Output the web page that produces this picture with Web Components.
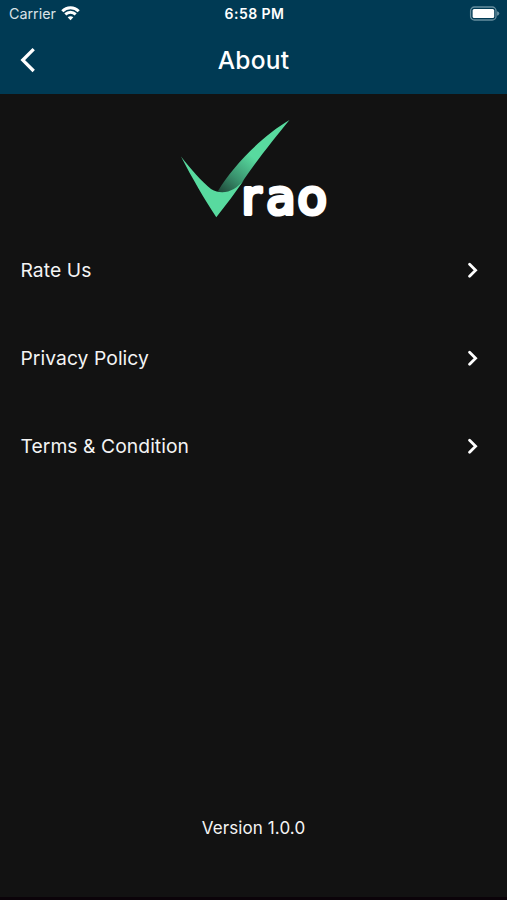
<!DOCTYPE html>
<html lang="en">
<head>
<meta charset="utf-8">
<title>About</title>
<style>
body{
    margin: 0;
    background: #121212;
}
</style>
</head>
<body>

<about-page>
    <status-bar slot="top" carrier="Carrier" time="6:58 PM"></status-bar>
    <nav-bar slot="top">About</nav-bar>
    <vrao-logo></vrao-logo>
    <menu-list>
        <menu-row>Rate Us</menu-row>
        <menu-row>Privacy Policy</menu-row>
        <menu-row>Terms &amp; Condition</menu-row>
    </menu-list>
    <span slot="version">Version 1.0.0</span>
</about-page>

<script>
function define(name, html){
    const template = document.createElement('template');
    template.innerHTML = html;

    customElements.define(name, class extends HTMLElement{
        constructor(){
            super();
            this.attachShadow({mode: 'open'});
            this.shadowRoot.appendChild(template.content.cloneNode(true));
        }

        // copies attributes into the spans with the same id
        connectedCallback(){
            this.shadowRoot.querySelectorAll('span[id]').forEach(span => {
                span.textContent = this.getAttribute(span.id);
            });
        }
    });
}

define('about-page', `
<style>
:host{
    display: flex;
    flex-direction: column;
    box-sizing: border-box;
    width: 507px;
    height: 900px;
    overflow: hidden;
    background: #121212;
    border-bottom: 3px solid #0b0309;
    color: #f4f4f4;
    font-family: Inter, "Liberation Sans", sans-serif;
}
header{
    height: 94px;
    background: #003a54;
    color: #fff;
}
main{
    flex: 1;
}
footer{
    padding-bottom: 56px;
    text-align: center;
    font-size: 17px;
    line-height: 26px;
    letter-spacing: 0.1px;
}
</style>
<header><slot name="top"></slot></header>
<main><slot></slot></main>
<footer><slot name="version"></slot></footer>
`);

define('status-bar', `
<style>
:host{
    display: grid;
    grid-template-columns: 1fr auto 1fr;
    align-items: center;
    height: 27px;
    padding: 0 7px 0 9px;
    font-size: 14.3px;
}
.left{
    display: flex;
    align-items: center;
    gap: 5px;
    color: #d9e2e7;
}
#time{
    font-size: 14px;
    font-weight: 600;
    letter-spacing: 0.45px;
}
.battery{
    justify-self: end;
}
svg{
    display: block;
}
</style>
<div class="left">
    <span id="carrier"></span>
    <svg width="19" height="15" viewBox="0 0 19 15" fill="none" stroke="#fff" stroke-width="2.9">
        <path d="M1.3 5.3C5.9.6 13.1.6 17.7 5.3"/>
        <path d="M4.3 8.4C7.3 5.5 11.7 5.5 14.7 8.4"/>
        <path d="M9.5 14.3L6.7 11.3C8.3 9.8 10.7 9.8 12.3 11.3Z" fill="#fff" stroke="none"/>
    </svg>
</div>
<span id="time"></span>
<svg class="battery" width="31" height="15" viewBox="0 0 31 15">
    <rect x="1.6" y="1" width="25.4" height="13" rx="3.8" fill="none" stroke="#668e9f" stroke-width="1.3"/>
    <rect x="3.6" y="3" width="21.6" height="9" rx="1.5" fill="#fff"/>
    <path d="M28 5.2Q30.3 5.8 30.3 7.5T28 9.8Z" fill="#668e9f"/>
</svg>
`);

define('nav-bar', `
<style>
:host{
    display: grid;
    grid-template-columns: 1fr auto 1fr;
    align-items: center;
    height: 65px;
    padding: 0 20px;
    font-size: 24.5px;
    font-weight: 500;
    letter-spacing: 0.2px;
}
svg{
    display: block;
}
</style>
<svg width="16" height="26" viewBox="0 0 16 26" fill="none" stroke="#fff" stroke-width="3.3">
    <path d="M13.7 2.2L2.8 13.1L13.7 24"/>
</svg>
<slot></slot>
`);

define('vrao-logo', `
<style>
:host{
    display: block;
    width: 150px;
    height: 100px;
    margin: 25px auto 0 179px;
}
svg{
    display: block;
    overflow: visible;
}
/* the round stroke softens the corners of the letters */
text{
    font-family: "DejaVu Sans", sans-serif;
    font-size: 48px;
    stroke: #fff;
    stroke-width: 4px;
    stroke-linejoin: round;
}
</style>
<svg width="150" height="100" viewBox="179 119 150 100">
    <defs>
        <linearGradient id="fold" gradientUnits="userSpaceOnUse" x1="222" y1="194" x2="253" y2="157">
            <stop offset="0" stop-color="#20483a"/>
            <stop offset="0.45" stop-color="#3a946f"/>
            <stop offset="1" stop-color="#58da9f"/>
        </linearGradient>
    </defs>
    <path d="M289.5 120C262 136 232 167 218 191C226 196 235 191 241 184C253 165 274 139 289.5 120Z" fill="url(#fold)"/>
    <path d="M181 156.5C190 168 202 182 211 189C223 196 235 191 244 180C235 193 226 205 216.3 217.3C205 200 192 178 181 156.5Z" fill="#58da9f"/>
    <text x="241.4 266.3 297.5" y="214.3" fill="#fff">rao</text>
</svg>
`);

define('menu-list', `
<style>
:host{
    display: flex;
    flex-direction: column;
    gap: 36px;
    margin-top: 25px;
}
</style>
<slot></slot>
`);

define('menu-row', `
<style>
:host{
    display: flex;
    align-items: center;
    justify-content: space-between;
    height: 52px;
    padding: 0 28px 0 20.5px;
    font-size: 19.3px;
    letter-spacing: 0.06px;
}
</style>
<div><slot></slot></div>
<svg width="12" height="16" viewBox="0 0 12 16" fill="none" stroke="#fff" stroke-width="2.8" stroke-linecap="round">
    <path d="M2.6 2.3L8.6 8.3L2.6 14.3"/>
</svg>
`);
</script>
</body>
</html>
